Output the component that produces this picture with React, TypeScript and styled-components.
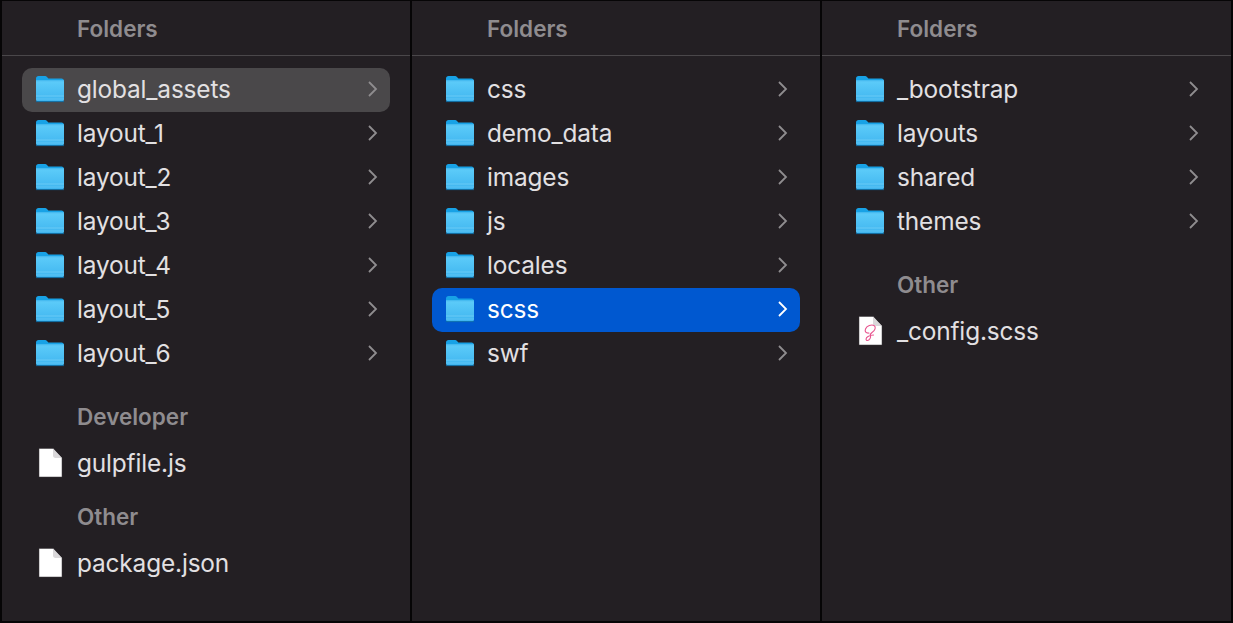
import React from "react";
import styled, { createGlobalStyle } from "styled-components";

const Global = createGlobalStyle`
  html, body { margin: 0; padding: 0; background: #000; }
  * { box-sizing: border-box; }
`;

const Browser = styled.div`
  width: 1233px;
  height: 623px;
  padding: 1px 2px 2px;
  background: #060506;
  display: grid;
  grid-template-columns: 408px 408px 409px;
  column-gap: 2px;
  font-family: Inter, "Liberation Sans", sans-serif;
  -webkit-font-smoothing: antialiased;
`;

const Column = styled.section`
  background: #231f23;
  display: flex;
  flex-direction: column;
  overflow: hidden;
`;

const Header = styled.header`
  height: 55px;
  flex: none;
  padding: 1px 0 0 75px;
  display: flex;
  align-items: center;
  border-bottom: 1px solid #4a474a;
  font-size: 22.5px;
  font-weight: 600;
  color: #8f8c8f;
`;

const Body = styled.div`
  padding: 12px 20px 0;
`;

const Heading = styled.h3<{ $gap: number }>`
  margin: ${(p) => p.$gap}px 0 9px;
  padding-left: 55px;
  height: 32px;
  line-height: 32px;
  font-size: 22.5px;
  font-weight: 600;
  color: #8f8c8f;
`;

const Row = styled.div<{ $state?: "active" | "muted" }>`
  height: 44px;
  border-radius: 10px;
  display: flex;
  align-items: center;
  padding: 0 13px 2px;
  background: ${(p) =>
    p.$state === "active" ? "#0058d0" : p.$state === "muted" ? "#4a484a" : "transparent"};
  color: ${(p) => (p.$state === "active" ? "#fff" : "#e2e0e2")};
`;

const IconSlot = styled.span`
  width: 30px;
  height: 30px;
  flex: none;
  display: block;
  margin-right: 12px;
`;

const Name = styled.span`
  flex: 1;
  font-size: 24.4px;
  letter-spacing: -0.15px;
  line-height: 42px;
  white-space: nowrap;
`;

const Chevron = styled.svg`
  width: 12px;
  height: 18px;
  flex: none;
  margin-right: -1px;
`;

const FolderIcon = ({ id }: { id: string }) => (
  <svg viewBox="0 1 30 30" width="30" height="30" style={{ display: "block" }}>
    <defs>
      <linearGradient id={id} x1="0" y1="0" x2="0" y2="1">
        <stop offset="0" stopColor="#5ccbf9" />
        <stop offset="1" stopColor="#3fb5ef" />
      </linearGradient>
    </defs>
    <path
      d="M1 5.500C1 4 2 3 3.500 3h6.200c1 0 1.600.3 2.300 1l1.400 1.500H26.500C28 5.500 29 6.500 29 8v3H1z"
      fill="#18a2e6"
    />
    <path
      d="M1 8.500h27.500c.4 0 .5.200.5.500v17.500c0 1.300-.9 2-2 2H3c-1.200 0-2-.8-2-2z"
      fill={`url(#${id})`}
    />
    <rect x="1" y="7.500" width="28" height="1" fill="#74d4fb" />
    <rect x="1" y="22.500" width="28" height="1" fill="#78d2f9" opacity=".7" />
    <rect x="1" y="25.500" width="28" height="1" fill="#78d2f9" opacity=".5" />
    <rect x="1" y="28.200" width="28" height=".9" fill="#0d6fa8" />
  </svg>
);

const FileIcon = ({ sass }: { sass?: boolean }) => (
  <svg viewBox="0 0 30 30" width="30" height="30" style={{ display: "block" }}>
    <path d="M4 0.500h14l9 9.500v19H4z" fill="#fff" stroke="#3a373a" strokeWidth=".5" />
    <path d="M18 .5v7c0 1.500 1 2.500 2.500 2.500H27z" fill="#d9d7d9" />
    {sass && (
      <path
        d="M14 17c-3 .5-4.500-1.500-3.500-4 1.200-3 6-5 8.500-3.500 2.500 1.500 1 5-2 7-1.500 1-2 2.500-1.500 3.500.5 1.500-1 4.500-3 4.500s-2-2.500.5-4 4-1.500 5.500-1.500"
        fill="none"
        stroke="#e8558f"
        strokeWidth="1.100"
        strokeLinecap="round"
      />
    )}
  </svg>
);

type Item = { name: string; kind: "folder" | "file" | "sass"; state?: "active" | "muted" };

const Entry = ({ item, uid }: { item: Item; uid: string }) => (
  <Row $state={item.state}>
    <IconSlot>
      {item.kind === "folder" ? <FolderIcon id={uid} /> : <FileIcon sass={item.kind === "sass"} />}
    </IconSlot>
    <Name>{item.name}</Name>
    {item.kind === "folder" && (
      <Chevron viewBox="0 0 12 18">
        <path
          d="M3 2l7 7-7 7"
          fill="none"
          stroke={item.state === "active" ? "#ffffff" : "#8f8d8f"}
          strokeWidth="1.800"
        />
      </Chevron>
    )}
  </Row>
);

const folders = (names: string[], states: Record<string, "active" | "muted"> = {}): Item[] =>
  names.map((name) => ({ name, kind: "folder", state: states[name] }));

const columns: { folders: Item[]; groups: { title: string; gap: number; items: Item[] }[] }[] = [
  {
    folders: folders(
      ["global_assets", "layout_1", "layout_2", "layout_3", "layout_4", "layout_5", "layout_6"],
      { global_assets: "muted" }
    ),
    groups: [
      { title: "Developer", gap: 25, items: [{ name: "gulpfile.js", kind: "file" }] },
      { title: "Other", gap: 15, items: [{ name: "package.json", kind: "file" }] },
    ],
  },
  {
    folders: folders(["css", "demo_data", "images", "js", "locales", "scss", "swf"], {
      scss: "active",
    }),
    groups: [],
  },
  {
    folders: folders(["_bootstrap", "layouts", "shared", "themes"]),
    groups: [{ title: "Other", gap: 25, items: [{ name: "_config.scss", kind: "sass" }] }],
  },
];

export default function App() {
  return (
    <>
      <Global />
      <Browser>
        {columns.map((col, c) => (
          <Column key={c}>
            <Header>Folders</Header>
            <Body>
              {col.folders.map((item, i) => (
                <Entry key={item.name} item={item} uid={`f${c}-${i}`} />
              ))}
              {col.groups.map((g) => (
                <div key={g.title}>
                  <Heading $gap={g.gap}>{g.title}</Heading>
                  {g.items.map((item) => (
                    <Entry key={item.name} item={item} uid={item.name} />
                  ))}
                </div>
              ))}
            </Body>
          </Column>
        ))}
      </Browser>
    </>
  );
}
